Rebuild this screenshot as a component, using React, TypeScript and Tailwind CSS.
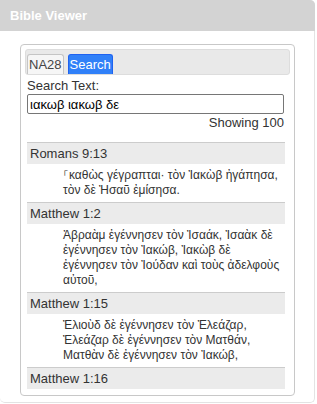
const results = [
  {
    ref: 'Romans 9:13',
    text: '⸀καθὼς γέγραπται· τὸν Ἰακὼβ ἠγάπησα, τὸν δὲ Ἠσαῦ ἐμίσησα.',
  },
  {
    ref: 'Matthew 1:2',
    text: 'Ἀβραὰμ ἐγέννησεν τὸν Ἰσαάκ, Ἰσαὰκ δὲ ἐγέννησεν τὸν Ἰακώβ, Ἰακὼβ δὲ ἐγέννησεν τὸν Ἰούδαν καὶ τοὺς ἀδελφοὺς αὐτοῦ,',
  },
  {
    ref: 'Matthew 1:15',
    text: 'Ἐλιοὺδ δὲ ἐγέννησεν τὸν Ἐλεάζαρ, Ἐλεάζαρ δὲ ἐγέννησεν τὸν Ματθάν, Ματθὰν δὲ ἐγέννησεν τὸν Ἰακώβ,',
  },
  {
    ref: 'Matthew 1:16',
    text: 'Ἰακὼβ δὲ ἐγέννησεν τὸν Ἰωσὴφ τὸν ἄνδρα Μαρίας, ἐξ ἧς ἐγεννήθη Ἰησοῦς ὁ λεγόμενος χριστός.',
  },
]

export default function App() {
  return (
    <div className="w-[317px] h-[404px] bg-white font-['Liberation_Sans',Arial,sans-serif] text-[13px] leading-[15px] text-[#333]">
      <div className="w-[315px] h-[403px] border border-t-0 border-l-0 border-[#e3e3e3] rounded-b-[5px] rounded-tr-[5px] flex flex-col">
        <div className="h-[31px] bg-[#d3d3d3] rounded-tr-[5px] flex items-center px-[10px] -mr-px">
          <span className="text-white font-bold text-[13px]">Bible Viewer</span>
        </div>

        <div className="mt-[13px] ml-[20px] mr-[19px] border border-[#c8c8c8] rounded-[4px] p-[4px] pb-[2px]">
          <div className="h-[26px] bg-[#e9e9e9] border border-[#dddddd] rounded-[3px] flex items-end gap-[4px] pl-[1px] -mb-px">
            <div className="h-[20px] px-[1px] bg-[#f6f6f6] border border-b-0 border-[#c5c5c5] rounded-t-[3px] text-[#454545] flex items-center">
              NA28
            </div>
            <div className="h-[20px] px-[1px] bg-[#3080f8] border border-b-0 border-[#1f62f0] rounded-t-[3px] text-white flex items-center">
              Search
            </div>
          </div>

          <div className="pl-[2px] pr-[6px] pt-[4px]">
            <div>Search Text:</div>
            <div className="mt-[1px] h-[20px] border border-[#767676] rounded-[2px] px-[2px] flex items-center text-black">
              ιακωβ ιακωβ δε
            </div>
            <div className="text-right mt-[1px]">Showing 100</div>

            <div className="mt-[12px] h-[251px] overflow-hidden mr-[-1px]">
              {results.map((r) => (
                <div key={r.ref} className="border-t border-[#cccccc]">
                  <div className="h-[21px] bg-[#ebebeb] px-[3px] flex items-center text-[#333]">
                    {r.ref}
                  </div>
                  <div className="pl-[36px] py-[4px] text-[12px] leading-[15px] text-[#333]">
                    {r.text}
                  </div>
                </div>
              ))}
            </div>
          </div>
        </div>
      </div>
    </div>
  )
}
